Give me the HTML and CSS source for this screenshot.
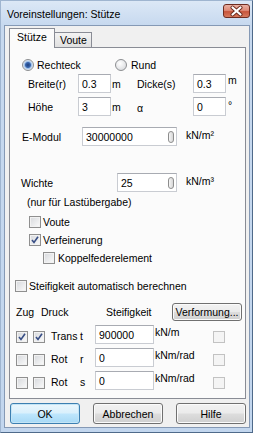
FILE: index.html
```html
<!DOCTYPE html>
<html lang="de">
<head>
  <meta charset="UTF-8">
  <title>Voreinstellungen: Stütze</title>
  <link rel="stylesheet" href="styles.css">
</head>
<body>

<div class="window">
  <div class="titlebar">
    <span class="title">Voreinstellungen: Stütze</span>
    <span class="close">
      <svg width="27" height="14" viewBox="0 0 27 14">
        <path d="M9.5 3.5 L17.5 10.5 M17.5 3.5 L9.5 10.5" stroke="#6b2a1d" stroke-width="4" stroke-linecap="round"/>
        <path d="M9.5 3.5 L17.5 10.5 M17.5 3.5 L9.5 10.5" stroke="#fff" stroke-width="2.2" stroke-linecap="round"/>
      </svg>
    </span>
  </div>

  <div class="client">
    <div class="tabs">
      <div class="tab active">Stütze</div>
      <div class="tab">Voute</div>
    </div>

    <div class="panel">
      <!-- Querschnitt -->
      <div class="radios">
        <div class="opt first"><span class="radio on"></span>Rechteck</div>
        <div class="opt"><span class="radio"></span>Rund</div>
      </div>

      <div class="dims">
        <span>Breite(r)</span>
        <span class="field">0.3</span>
        <span class="unit">m</span>
        <span>Dicke(s)</span>
        <span class="field">0.3</span>
        <span class="unit up">m</span>

        <span>Höhe</span>
        <span class="field">3</span>
        <span class="unit">m</span>
        <span class="alpha">α</span>
        <span class="field">0</span>
        <span class="unit up deg">°</span>
      </div>

      <div class="value-row emodul">
        <span class="lbl">E-Modul</span>
        <span class="field wide"><span>30000000</span><span class="grip"></span></span>
        <span class="unit">kN/m²</span>
      </div>

      <div class="value-row wichte">
        <span class="lbl">Wichte</span>
        <span class="field wide"><span>25</span><span class="grip"></span></span>
        <span class="unit">kN/m³</span>
      </div>

      <div class="note">(nur für Lastübergabe)</div>

      <div class="check-row sub first-check"><span class="check"></span>Voute</div>
      <div class="check-row sub"><span class="check on"></span>Verfeinerung</div>
      <div class="check-row subsub"><span class="check"></span>Koppelfederelement</div>

      <div class="check-row auto"><span class="check"></span>Steifigkeit automatisch berechnen</div>

      <!-- Federsteifigkeiten -->
      <div class="stiff-head">
        <span class="col-zug">Zug</span>
        <span class="col-druck">Druck</span>
        <span class="col-steif">Steifigkeit</span>
        <button class="btn small">Verformung...</button>
      </div>

      <div class="stiff">
        <span class="check on"></span>
        <span class="check on"></span>
        <span class="dof"><span class="dof-a">Trans</span><span>t</span></span>
        <span class="field">900000</span>
        <span class="unit">kN/m</span>
        <span class="check off"></span>

        <span class="check"></span>
        <span class="check"></span>
        <span class="dof"><span class="dof-a">Rot</span><span>r</span></span>
        <span class="field">0</span>
        <span class="unit">kNm/rad</span>
        <span class="check off"></span>

        <span class="check"></span>
        <span class="check"></span>
        <span class="dof"><span class="dof-a">Rot</span><span>s</span></span>
        <span class="field">0</span>
        <span class="unit">kNm/rad</span>
        <span class="check off"></span>
      </div>
    </div>

    <div class="buttons">
      <button class="btn default">OK</button>
      <button class="btn">Abbrechen</button>
      <button class="btn">Hilfe</button>
    </div>
  </div>
</div>

</body>
</html>
```

FILE: styles.css
```css
html, body {
  margin: 0;
  padding: 0;
}

body {
  font-family: "Liberation Sans", Arial, sans-serif;
  font-size: 10.5px;
  color: #000;
  width: 253px;
  height: 433px;
  overflow: hidden;
}

.window {
  width: 253px;
  height: 433px;
  box-sizing: border-box;
  border: 1px solid #4f6a8a;
  border-left-color: #9fb5d0;
  border-top-color: #9fb5d0;
  background: linear-gradient(#dce8f6 0, #c7d9ef 24px, #c2d6ee 100%);
  padding: 0 2px 4px 3px;
  display: flex;
  flex-direction: column;
}

/* title bar */
.titlebar {
  height: 24px;
  display: flex;
  align-items: center;
}
.title {
  padding-left: 3px;
  font-size: 10.5px;
  margin-top: 2px;
}
.close {
  margin-left: auto;
  align-self: flex-start;
  margin-top: 3px;
  width: 27px;
  height: 14px;
  box-sizing: border-box;
  border: 1px solid #6e2c20;
  border-radius: 3px;
  background: linear-gradient(#eab0a2 0%, #de8a77 45%, #c8553b 55%, #d77a5e 100%);
  display: flex;
  align-items: center;
  justify-content: center;
  overflow: hidden;
}
.close svg {
  display: block;
  margin: -1px;
}

.client {
  flex: 1;
  background: #f0f0f0;
  border: 1px solid #8599b5;
  display: flex;
  flex-direction: column;
}

/* tabs */
.tabs {
  display: flex;
  align-items: flex-end;
  height: 19px;
  margin: 2px 0 0 4px;
}
.tab {
  box-sizing: border-box;
  border: 1px solid #898c95;
  border-bottom: none;
  background: linear-gradient(#f3f3f3, #e0e0e0);
  height: 15px;
  width: 38px;
  padding-left: 5px;
  line-height: 14px;
  margin-left: -1px;
}
.tab.active {
  background: #fbfbfb;
  height: 20px;
  width: 46px;
  padding-left: 7px;
  line-height: 17px;
  margin-left: 0;
  margin-bottom: -1px;
  position: relative;
  z-index: 1;
}

.panel {
  margin: 0 3px 0 4px;
  height: 352px;
  box-sizing: border-box;
  border: 1px solid #898c95;
  background: #fbfbfb;
}

/* form parts */
.field {
  display: flex;
  align-items: center;
  box-sizing: border-box;
  height: 19px;
  padding: 0 3px;
  background: #fff;
  border: 1px solid #c9ccd2;
  border-top-color: #a8abb2;
}
.field.wide {
  justify-content: space-between;
  padding-right: 2px;
}
.grip {
  width: 6px;
  height: 12px;
  box-sizing: border-box;
  border: 1px solid #8d8d8d;
  border-radius: 3px;
  background: linear-gradient(90deg, #f6f6f6, #d6d6d6);
}

.unit {
  padding-left: 1px;
}
.unit.up {
  align-self: start;
  padding-left: 2px;
  line-height: 12px;
}
.unit.deg {
  margin-top: 2px;
}

.radio {
  width: 12px;
  height: 12px;
  box-sizing: border-box;
  border-radius: 50%;
  border: 1px solid #8c8e91;
  background: radial-gradient(circle at 40% 35%, #ffffff, #d2d4d8);
  display: inline-block;
}
.radio.on {
  background: radial-gradient(circle, #1e3f7c 0, #3a67b0 2.5px, #9fc0e8 3.5px, #e6ecf4 5px);
}

.check {
  width: 12px;
  height: 12px;
  box-sizing: border-box;
  border: 1px solid #8f8f8f;
  background: linear-gradient(135deg, #d6d8dc, #fbfbfb);
  box-shadow: inset 0 0 0 1px #f2f2f2;
  display: inline-block;
}
.check.on {
  background-image: url("data:image/svg+xml,%3Csvg xmlns='http://www.w3.org/2000/svg' width='10' height='10'%3E%3Cpath d='M2 5 L4 7.5 L8 1.8' fill='none' stroke='%23384e85' stroke-width='1.6'/%3E%3C/svg%3E"), linear-gradient(135deg, #d6d8dc, #fbfbfb);
  background-repeat: no-repeat;
}
.check.off {
  border-color: #c2c2c2;
  background: #f4f4f4;
  box-shadow: none;
}

/* rows */
.radios {
  display: flex;
  height: 14px;
  align-items: center;
  margin-top: 10px;
  padding-left: 12px;
}
.opt {
  display: flex;
  align-items: center;
  gap: 4px;
}
.opt.first {
  width: 93px;
  gap: 3px;
}

.dims {
  display: grid;
  grid-template-columns: 50px 33px 26px 56px 33px 1fr;
  grid-auto-rows: 19px;
  row-gap: 4px;
  align-items: center;
  margin-top: 2px;
  padding-left: 18px;
}
.alpha {
  margin-top: 3px;
}

.value-row {
  display: flex;
  align-items: center;
  height: 19px;
}
.value-row .unit {
  margin-left: 8px;
  align-self: flex-start;
  line-height: 12px;
  margin-top: 2px;
}
.emodul {
  margin-top: 11px;
  padding-left: 12px;
}
.emodul .lbl { width: 60px; }
.emodul .field { width: 95px; }
.wichte {
  margin-top: 27px;
  padding-left: 11px;
}
.wichte .lbl { width: 96px; }
.wichte .field { width: 60px; }

.note {
  margin-top: 4px;
  height: 12px;
  line-height: 12px;
  padding-left: 17px;
}

.check-row {
  display: flex;
  align-items: center;
  gap: 2px;
  height: 14px;
  margin-top: 4px;
}
.check-row.sub { padding-left: 19px; }
.check-row.first-check { margin-top: 7px; }
.check-row.subsub { padding-left: 33px; gap: 3px; }
.check-row.auto { padding-left: 5px; margin-top: 14px; }

.stiff-head {
  display: flex;
  align-items: center;
  height: 18px;
  margin-top: 10px;
  padding-left: 6px;
}
.col-zug { width: 25px; }
.col-druck { width: 65px; }
.col-steif { width: 66px; }

.stiff {
  display: grid;
  grid-template-columns: 17px 18px 44px 59px 59px 12px;
  grid-auto-rows: 19px;
  row-gap: 4px;
  align-items: center;
  margin-top: 4px;
  padding-left: 6px;
}
.stiff .check {
  margin-top: 4px;
}
.stiff .unit {
  align-self: start;
  line-height: 12px;
  margin-top: 1px;
  padding-left: 1px;
}
.dof {
  display: flex;
  margin-top: 3px;
}
.dof-a {
  width: 29px;
}

/* buttons */
.btn {
  font-family: inherit;
  font-size: 10.5px;
  color: #000;
  width: 70px;
  height: 21px;
  padding: 0;
  border: 1px solid #707070;
  border-radius: 3px;
  background: linear-gradient(#f2f2f2 0%, #ebebeb 48%, #dddddd 52%, #cfcfcf 100%);
  box-shadow: inset 0 0 0 1px #fbfbfb;
}
.btn.small {
  height: 18px;
  line-height: 14px;
}
.btn.default {
  border-color: #3c7fb1;
  background: linear-gradient(#eaf6fd 0%, #d9f0fc 48%, #bee6fd 52%, #a7d9f5 100%);
  box-shadow: inset 0 0 0 1px #c4e5f6;
}

.buttons {
  display: flex;
  gap: 13px;
  margin: 4px 0 0 5px;
}
```
